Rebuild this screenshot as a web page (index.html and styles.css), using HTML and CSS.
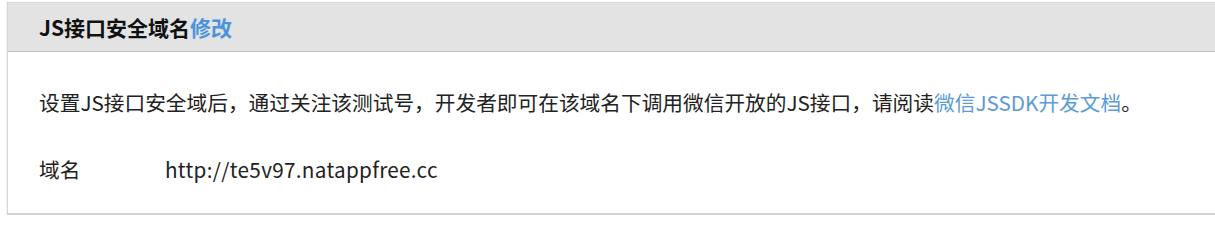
FILE: index.html
```html
<!DOCTYPE html>
<html lang="zh-CN">
<head>
<meta charset="utf-8">
<title>JS接口安全域名</title>
<link rel="stylesheet" href="styles.css">
</head>
<body>
<div class="panel">
  <div class="panel-head">
    <span class="title">JS接口安全域名</span><a class="edit" href="#">修改</a>
  </div>
  <div class="panel-body">
    <p class="desc">设置JS接口安全域后，通过关注该测试号，开发者即可在该域名下调用微信开放的JS接口，请阅读<a class="doc" href="#">微信JSSDK开发文档</a>。</p>
    <div class="row">
      <span class="label">域名</span>
      <span class="value">http://te5v97.natappfree.cc</span>
    </div>
  </div>
</div>
</body>
</html>
```
FILE: styles.css
```css
html, body {
  margin: 0;
  padding: 0;
  background: #ffffff;
}
body {
  font-family: "Noto Sans CJK SC", "Noto Sans", sans-serif;
  color: #222222;
  overflow: hidden;
}
a {
  text-decoration: none;
}
.panel {
  margin: 2px -10px 0 7px;
  border: 1px solid #d6d6d6;
  border-bottom: 2px solid #d2d2d2;
  box-shadow: -1px 0 1px rgba(0, 0, 0, 0.04);
  background: #ffffff;
}
.panel-head {
  height: 48px;
  line-height: 48px;
  background: #e3e3e3;
  border-bottom: 1px solid #c4c4c4;
  padding-left: 31px;
  font-size: 21px;
  font-weight: bold;
}
.title {
  color: #111111;
}
.edit {
  color: #4b93dc;
}
.panel-body {
  padding: 35px 0 29px 31px;
  font-size: 20.7px;
  line-height: 30px;
}
.desc {
  margin: 0 0 37px 0;
}
.doc {
  color: #5c9bd6;
}
.row {
  display: flex;
}
.label {
  width: 126px;
}
.value {
  letter-spacing: 0.3px;
}
```
